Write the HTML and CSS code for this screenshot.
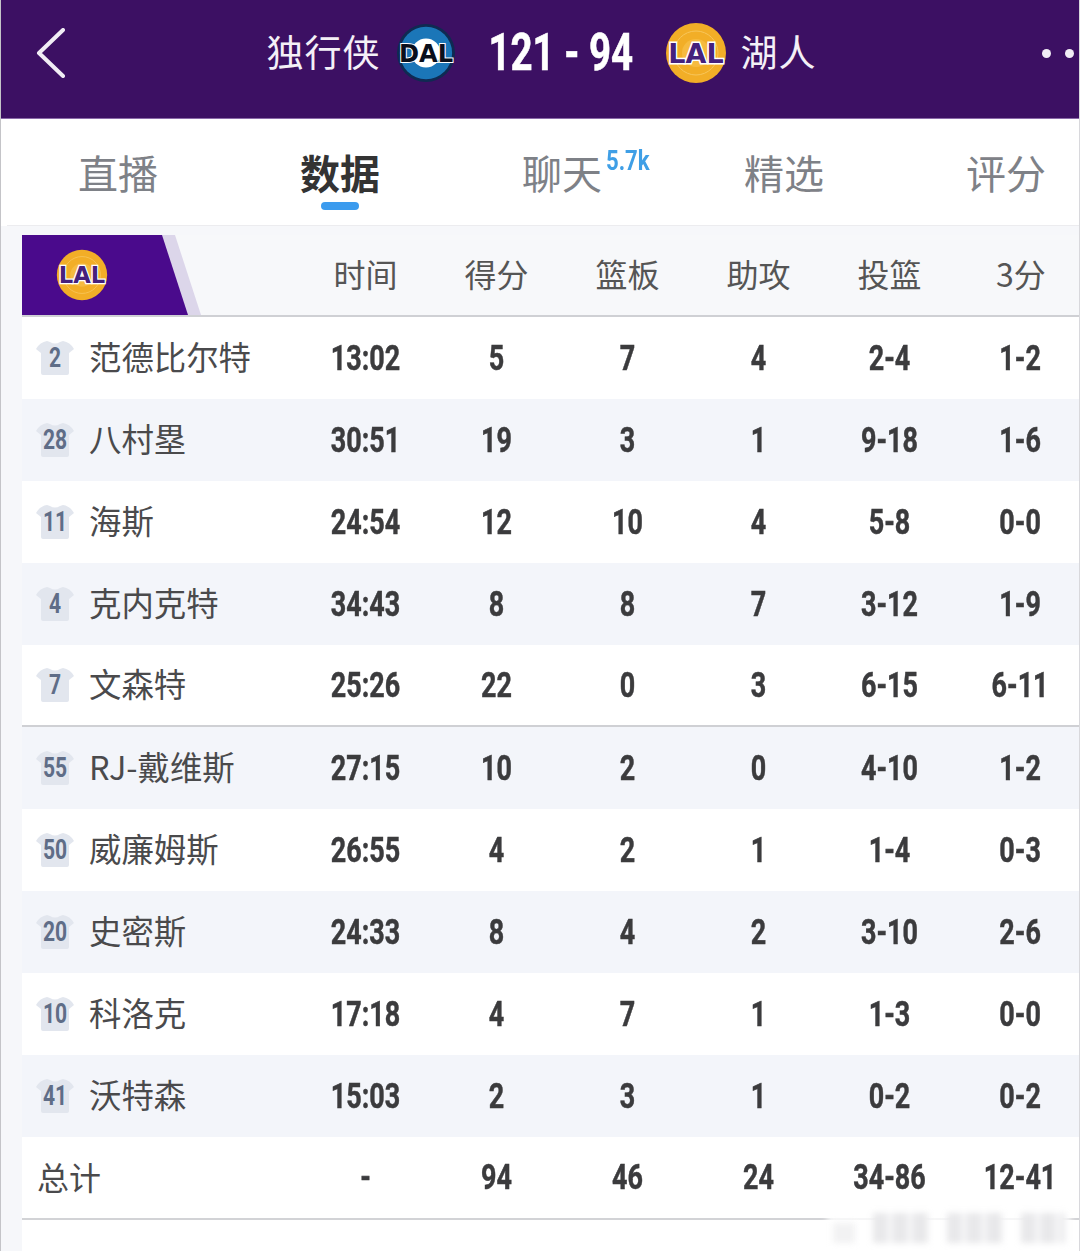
FILE: index.html
```html
<!DOCTYPE html>
<html lang="zh-CN">
<head>
  <meta charset="UTF-8">
  <title>独行侠 121 - 94 湖人</title>
  <link rel="stylesheet" href="styles.css">
</head>
<body>
  <svg class="defs" width="0" height="0">
    <symbol id="shirt" viewBox="0 0 38 36">
      <path d="M11 1 L14 2 Q19 5 24 2 L27 1 Q34 2 38 9 L33 13 V33 Q33 35 31 35 H7 Q5 35 5 33 V13 L0 9 Q4 2 11 1 Z"/>
    </symbol>
  </svg>

  <header class="topbar">
    <svg class="back" viewBox="0 0 30 50"><path d="M27 2 L3 25 L27 48"/></svg>
    <div class="match">
      <span class="team-name">独行侠</span>
      <svg class="logo dal" viewBox="0 0 62 62">
        <circle cx="31" cy="31" r="30" fill="#0f2a52"/>
        <circle cx="31" cy="31" r="27" fill="#1b76b8"/>
        <circle cx="31" cy="31" r="15" fill="#fff"/>
        <text class="logo-dal" x="31" y="40">DAL</text>
      </svg>
      <span class="score"><span>121 - 94</span></span>
      <svg class="logo lal" viewBox="0 0 62 62">
        <circle cx="31" cy="31" r="30" fill="#f2ae27"/>
        <circle cx="31" cy="31" r="22" fill="none" stroke="#f8c65a" stroke-width="1"/>
        <circle cx="31" cy="31" r="14" fill="#f6bb40"/>
        <text class="logo-lal" x="31" y="41">LAL</text>
      </svg>
      <span class="team-name">湖人</span>
    </div>
    <div class="dots"><i></i><i></i></div>
  </header>

  <nav class="tabs">
    <a>直播</a>
    <a class="active">数据</a>
    <a>聊天<sup>5.7k</sup></a>
    <a>精选</a>
    <a>评分</a>
  </nav>

  <main class="stats">
    <div class="row head">
      <div class="team-tag">
        <svg class="logo small" viewBox="0 0 62 62">
          <circle cx="31" cy="31" r="30" fill="#f2ae27"/>
          <circle cx="31" cy="31" r="22" fill="none" stroke="#f8c65a" stroke-width="1"/>
          <circle cx="31" cy="31" r="14" fill="#f6bb40"/>
          <text class="logo-lal" x="31" y="41">LAL</text>
        </svg>
      </div>
      <div>时间</div><div>得分</div><div>篮板</div><div>助攻</div><div>投篮</div><div>3分</div>
    </div>

    <div class="row">
      <div class="player"><svg class="jersey"><use href="#shirt"/><text x="19" y="27">2</text></svg>范德比尔特</div>
      <b>13:02</b><b>5</b><b>7</b><b>4</b><b>2-4</b><b>1-2</b>
    </div>
    <div class="row alt">
      <div class="player"><svg class="jersey"><use href="#shirt"/><text x="19" y="27">28</text></svg>八村塁</div>
      <b>30:51</b><b>19</b><b>3</b><b>1</b><b>9-18</b><b>1-6</b>
    </div>
    <div class="row">
      <div class="player"><svg class="jersey"><use href="#shirt"/><text x="19" y="27">11</text></svg>海斯</div>
      <b>24:54</b><b>12</b><b>10</b><b>4</b><b>5-8</b><b>0-0</b>
    </div>
    <div class="row alt">
      <div class="player"><svg class="jersey"><use href="#shirt"/><text x="19" y="27">4</text></svg>克内克特</div>
      <b>34:43</b><b>8</b><b>8</b><b>7</b><b>3-12</b><b>1-9</b>
    </div>
    <div class="row starter-end">
      <div class="player"><svg class="jersey"><use href="#shirt"/><text x="19" y="27">7</text></svg>文森特</div>
      <b>25:26</b><b>22</b><b>0</b><b>3</b><b>6-15</b><b>6-11</b>
    </div>
    <div class="row alt">
      <div class="player"><svg class="jersey"><use href="#shirt"/><text x="19" y="27">55</text></svg>RJ-戴维斯</div>
      <b>27:15</b><b>10</b><b>2</b><b>0</b><b>4-10</b><b>1-2</b>
    </div>
    <div class="row">
      <div class="player"><svg class="jersey"><use href="#shirt"/><text x="19" y="27">50</text></svg>威廉姆斯</div>
      <b>26:55</b><b>4</b><b>2</b><b>1</b><b>1-4</b><b>0-3</b>
    </div>
    <div class="row alt">
      <div class="player"><svg class="jersey"><use href="#shirt"/><text x="19" y="27">20</text></svg>史密斯</div>
      <b>24:33</b><b>8</b><b>4</b><b>2</b><b>3-10</b><b>2-6</b>
    </div>
    <div class="row">
      <div class="player"><svg class="jersey"><use href="#shirt"/><text x="19" y="27">10</text></svg>科洛克</div>
      <b>17:18</b><b>4</b><b>7</b><b>1</b><b>1-3</b><b>0-0</b>
    </div>
    <div class="row alt">
      <div class="player"><svg class="jersey"><use href="#shirt"/><text x="19" y="27">41</text></svg>沃特森</div>
      <b>15:03</b><b>2</b><b>3</b><b>1</b><b>0-2</b><b>0-2</b>
    </div>
    <div class="row total">
      <div class="total-label">总计</div>
      <b>-</b><b>94</b><b>46</b><b>24</b><b>34-86</b><b>12-41</b>
    </div>
    <div class="tail"></div>
  </main>

  <div class="watermark">
    <i class="w1"></i><i class="w2"></i><i class="w2"></i><i class="w3"></i>
  </div>
</body>
</html>
```

FILE: styles.css
```css
* {
  box-sizing: border-box;
}

html, body {
  margin: 0;
  padding: 0;
}

body {
  position: relative;
  width: 1080px;
  height: 1251px;
  overflow: hidden;
  font-family: "Noto Sans CJK SC", "Noto Sans", sans-serif;
  background: #fff;
  color: #444;
  border-left: 1px solid #c4c4c8;
  border-right: 1px solid #d8d8dc;
}

.defs {
  position: absolute;
}

/* top bar */
.topbar {
  display: grid;
  grid-template-columns: 1fr auto 1fr;
  align-items: center;
  height: 119px;
  margin-left: -1px;
  margin-right: -1px;
  padding: 0 6px 12px 6px;
  background: #3c1063;
  border-bottom: 1px solid #8a6aa8;
}

.back {
  width: 30px;
  height: 50px;
  margin-left: 30px;
  fill: none;
  stroke: #f1edf5;
  stroke-width: 4;
  stroke-linecap: round;
  stroke-linejoin: round;
}

.match {
  display: flex;
  align-items: center;
  margin-left: 3px;
  color: #f4f0f7;
}

.team-name {
  padding-bottom: 4px;
  font-size: 37px;
  line-height: 50px;
  letter-spacing: 1px;
}

.logo {
  width: 62px;
  height: 62px;
  overflow: visible;
}

.logo.dal {
  width: 60px;
  height: 60px;
  margin-left: 15px;
}

.logo.lal {
  margin-right: 14px;
}

.logo.small {
  width: 52px;
  height: 52px;
}

.logo-dal, .logo-lal {
  font-family: "DejaVu Sans", sans-serif;
  font-weight: 700;
  text-anchor: middle;
  paint-order: stroke;
}

.logo-dal {
  font-size: 25px;
  fill: #0a0f1c;
  stroke: #fff;
  stroke-width: 2px;
}

.logo-lal {
  font-size: 27px;
  fill: #45217c;
  stroke: #fff;
  stroke-width: 3px;
}

.score, .row b, .jersey text, .tabs sup {
  font-family: Roboto, "Liberation Sans", sans-serif;
  font-weight: 700;
}

.score {
  display: flex;
  justify-content: center;
  width: 144px;
  margin: 0 32px 0 33px;
  font-size: 52px;
  line-height: 56px;
  color: #fff;
  white-space: nowrap;
  -webkit-text-stroke: 0.6px #fff;
}

.score span {
  flex: none;
  transform: scaleX(0.74);
}

.dots {
  display: flex;
  justify-content: flex-end;
  gap: 14px;
}

.dots i {
  width: 9px;
  height: 9px;
  border-radius: 50%;
  background: #f1edf5;
}

/* tabs */
.tabs {
  display: grid;
  grid-template-columns: repeat(4, 222px) 1fr;
  height: 107px;
  margin-left: 6px;
  border-bottom: 1px solid #ececef;
}

.tabs a {
  position: relative;
  padding-top: 25px;
  font-size: 40px;
  line-height: 56px;
  text-align: center;
  color: #7e8187;
}

.tabs a:last-child {
  padding-left: 38px;
}

.tabs a.active {
  font-weight: 700;
  color: #333;
}

.tabs a.active::after {
  content: "";
  position: absolute;
  left: 92px;
  bottom: 15px;
  width: 38px;
  height: 8px;
  border-radius: 4px;
  background: #3b9bee;
}

.tabs sup {
  position: absolute;
  top: 27px;
  left: 155px;
  font-size: 27px;
  line-height: 30px;
  color: #3f9fe6;
  transform: scaleX(0.82);
  transform-origin: left center;
}

/* table */
.stats {
  padding: 9px 0 0 21px;
  background: #f6f7fa;
  height: 1025px;
}

.row {
  display: grid;
  grid-template-columns: 278px repeat(5, 131px) 1fr;
  align-items: center;
  height: 82px;
  background: #fff;
  text-align: center;
  white-space: nowrap;
}

.row > :last-child {
  padding-left: 8px;
}

.row.alt {
  background: #f3f5fa;
}

.row.starter-end {
  border-bottom: 2px solid #cfd0d4;
}

.row.head {
  height: 82px;
  background: #f7f8fa;
  border-bottom: 2px solid #cfd0d4;
  font-size: 32px;
  color: #555;
}

.row.head > div:not(.team-tag) {
  padding-bottom: 4px;
}

.row b {
  font-size: 35px;
  color: #3b3b3d;
  -webkit-text-stroke: 0.5px #3b3b3d;
  transform: scaleX(0.77);
}

.team-tag {
  display: flex;
  align-items: center;
  align-self: stretch;
  position: relative;
  width: 180px;
  padding-left: 34px;
  background: #dcd6ea;
  clip-path: polygon(0 0, 153px 0, 179px 100%, 0 100%);
}

.team-tag::before {
  content: "";
  position: absolute;
  inset: 0;
  background: #4a0a8c;
  clip-path: polygon(0 0, 140px 0, 166px 100%, 0 100%);
}

.team-tag .logo {
  position: relative;
}

.player {
  display: flex;
  align-items: center;
  gap: 15px;
  padding: 0 0 4px 14px;
  font-size: 32.4px;
  line-height: 40px;
  color: #4a4a4c;
  text-align: left;
}

.jersey {
  width: 38px;
  height: 36px;
  margin-bottom: -4px;
  fill: #e2e6ee;
}

.jersey text {
  font-size: 27px;
  fill: #5f6d87;
  text-anchor: middle;
  transform-box: fill-box;
  transform-origin: center;
  transform: scaleX(0.78);
}

.total-label {
  padding: 0 0 4px 15px;
  font-size: 32px;
  text-align: left;
  color: #4a4a4c;
}

.row.total {
  height: 81px;
}

.tail {
  height: 40px;
  background: #fff;
  border-top: 2px solid #d2d3d6;
}

/* blurred watermark, bottom right */
.watermark {
  position: absolute;
  left: 826px;
  bottom: 8px;
  display: flex;
  align-items: flex-end;
  gap: 18px;
  height: 36px;
  padding: 0 6px;
  background: rgba(255, 255, 255, 0.8);
  filter: blur(3px);
}

.watermark i {
  display: block;
  height: 30px;
  background: repeating-linear-gradient(90deg, #e8e8ea 0 14px, #f6f6f7 14px 20px);
}

.watermark .w1 { width: 22px; height: 20px; background: #f2f2f3; }
.watermark .w2 { width: 56px; }
.watermark .w3 { width: 44px; }
```
